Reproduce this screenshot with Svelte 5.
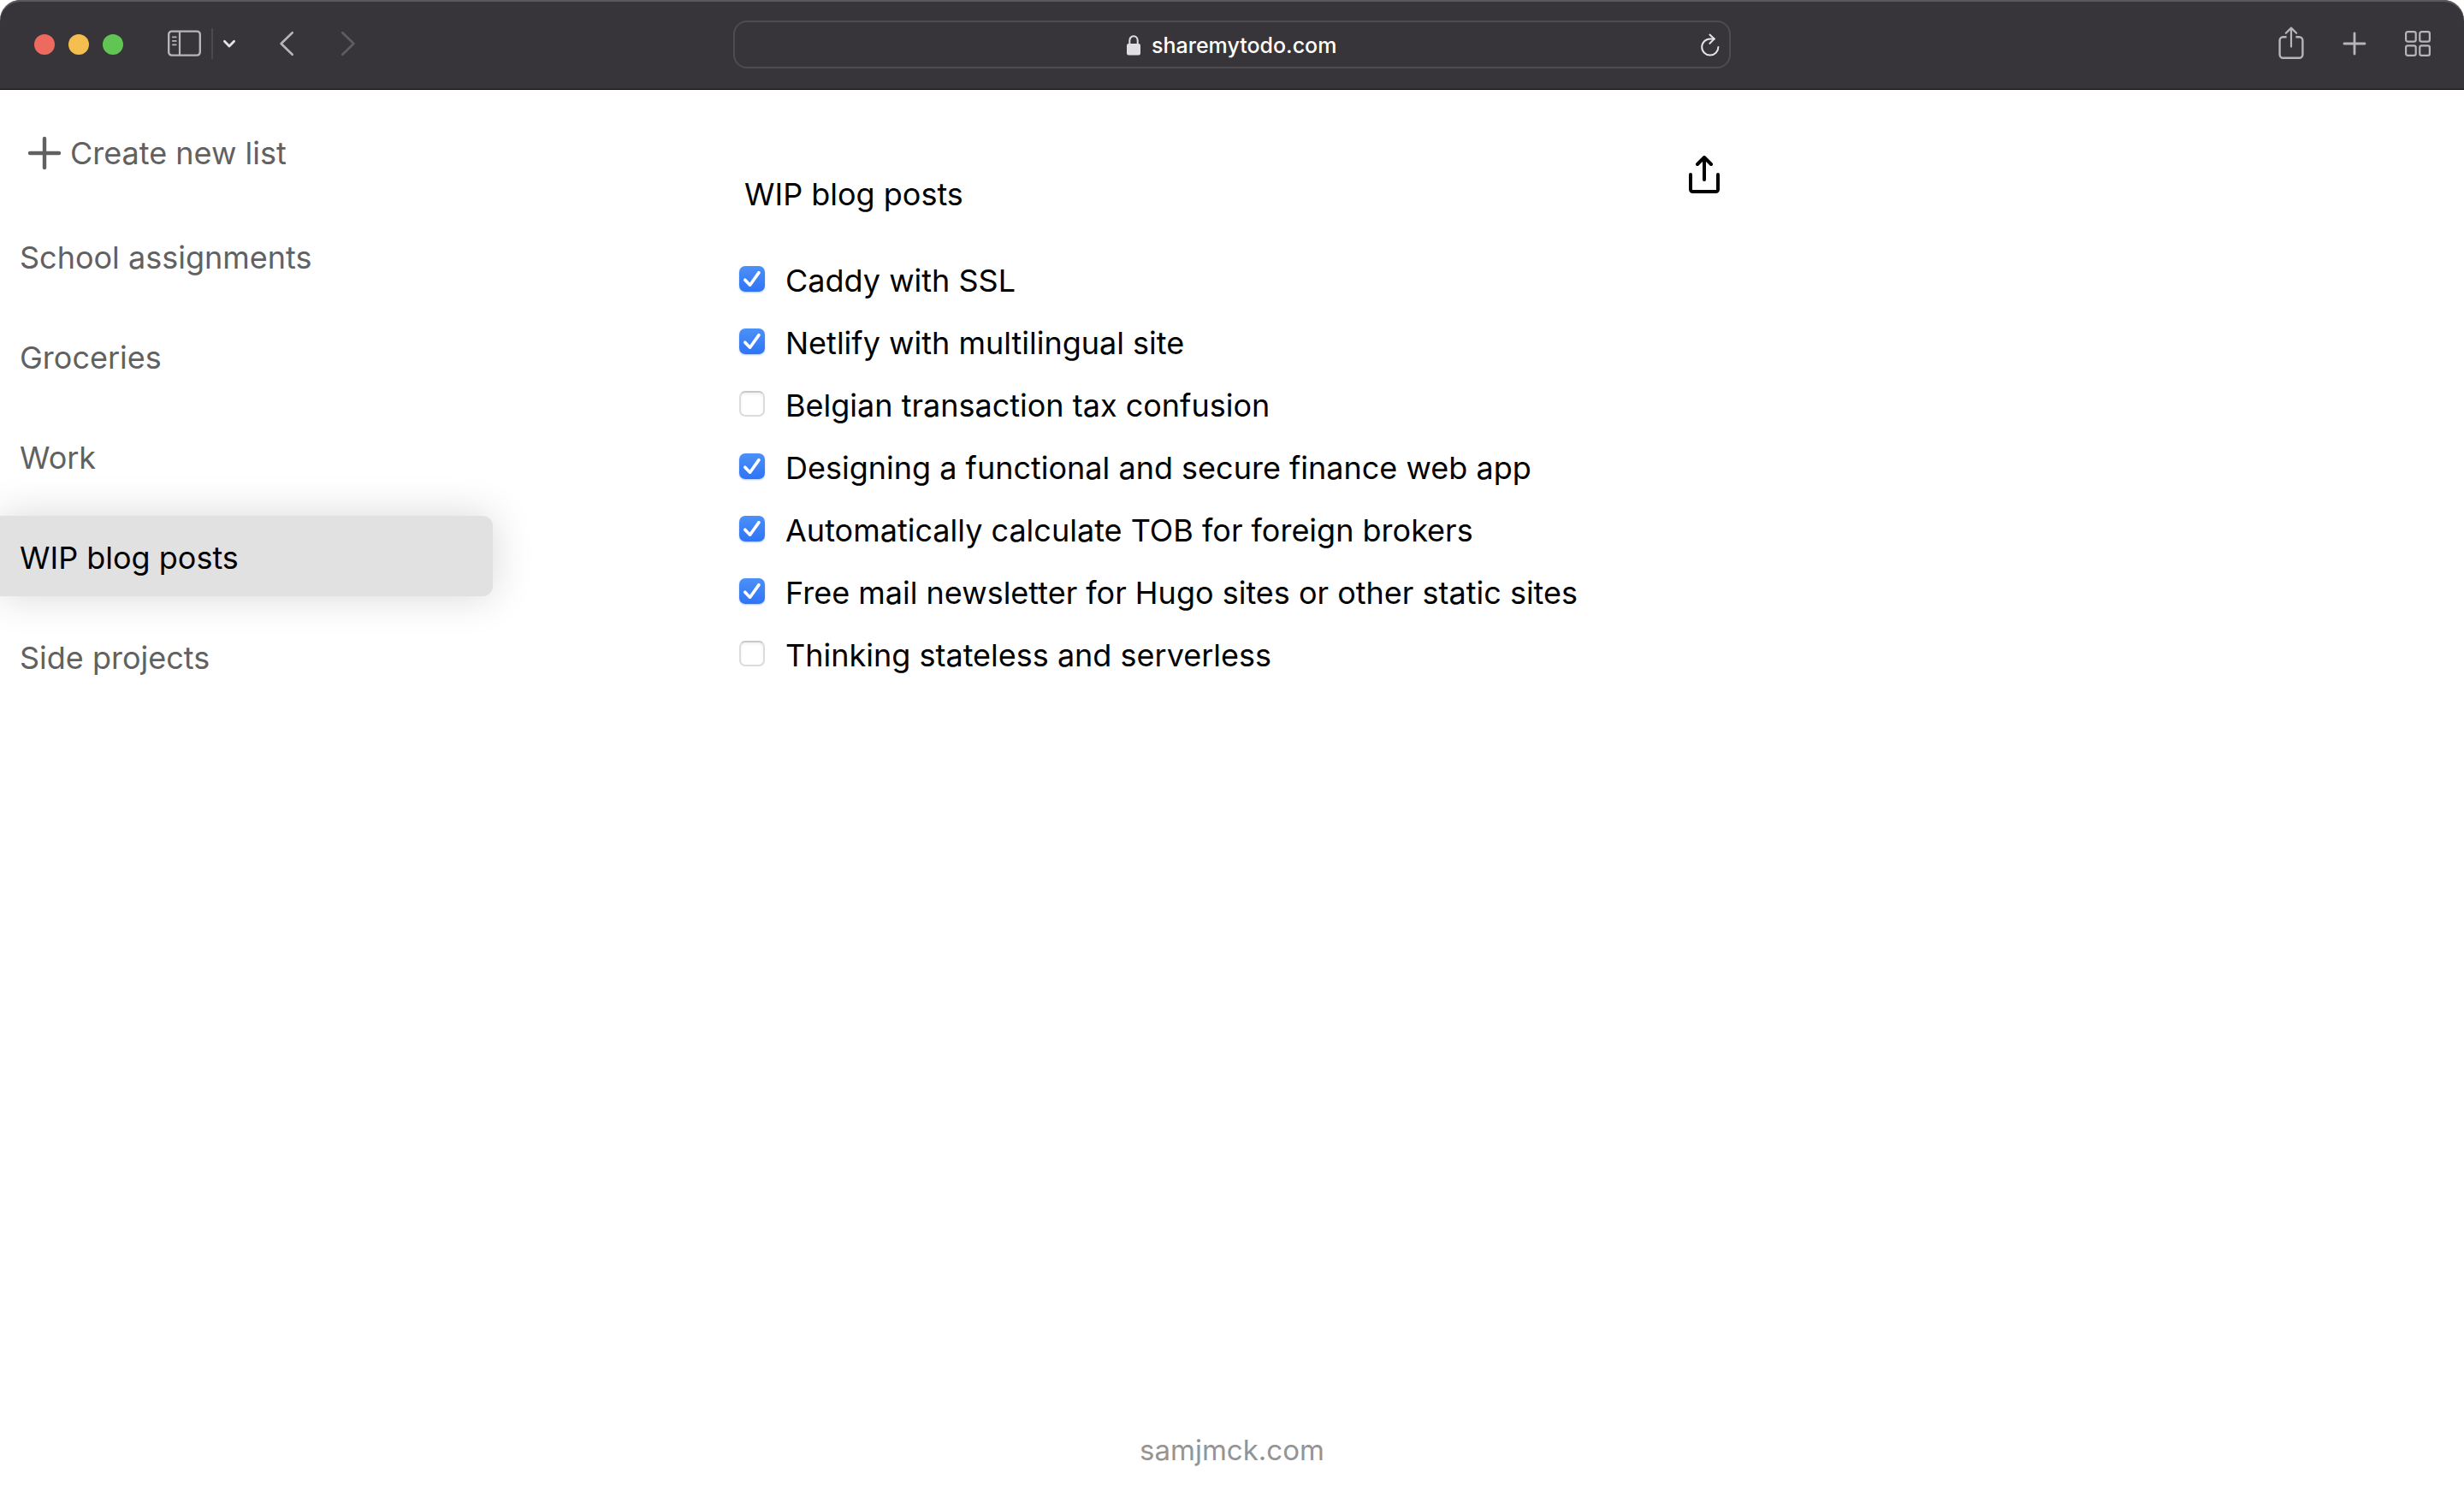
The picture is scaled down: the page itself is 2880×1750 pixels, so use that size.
<script lang="ts">
  type Todo = { text: string; done: boolean };

  const lists = ['School assignments', 'Groceries', 'Work', 'WIP blog posts', 'Side projects'];
  let active = $state('WIP blog posts');
  let address = $state('sharemytodo.com');

  let todos = $state<Todo[]>([
    { text: 'Caddy with SSL', done: true },
    { text: 'Netlify with multilingual site', done: true },
    { text: 'Belgian transaction tax confusion', done: false },
    { text: 'Designing a functional and secure finance web app', done: true },
    { text: 'Automatically calculate TOB for foreign brokers', done: true },
    { text: 'Free mail newsletter for Hugo sites or other static sites', done: true },
    { text: 'Thinking stateless and serverless', done: false }
  ]);
</script>

<div class="window">
  <header class="toolbar">
    <div class="tools left">
      <div class="lights">
        <button class="light close" aria-label="Close window"></button>
        <button class="light minimize" aria-label="Minimize window"></button>
        <button class="light zoom" aria-label="Zoom window"></button>
      </div>
      <div class="panel-tools">
        <button class="tool" aria-label="Show sidebar">
          <svg width="40" height="32" viewBox="0 0 40 32" fill="none" stroke="currentColor" stroke-width="2.4" stroke-linecap="round">
            <rect x="1.2" y="1.6" width="36.6" height="28" rx="3.6" />
            <path d="M14 2v27" stroke-width="2.2" />
            <path d="M5.8 8.4h4M5.8 12.9h4M5.8 17.3h4" stroke-width="1.7" />
          </svg>
        </button>
        <span class="divider"></span>
        <button class="tool bright" aria-label="Tab groups">
          <svg width="16" height="12" viewBox="0 0 16 12" fill="none" stroke="currentColor" stroke-width="2.8" stroke-linecap="round" stroke-linejoin="round">
            <path d="M2.4 3.2 8 9l5.6-5.8" />
          </svg>
        </button>
      </div>
      <div class="history">
        <button class="tool" aria-label="Back">
          <svg width="18" height="30" viewBox="0 0 18 30" fill="none" stroke="currentColor" stroke-width="2.6" stroke-linecap="round" stroke-linejoin="round">
            <path d="M15.7 2.2 2.6 15l13.1 12.8" />
          </svg>
        </button>
        <button class="tool dim" aria-label="Forward" disabled>
          <svg width="18" height="30" viewBox="0 0 18 30" fill="none" stroke="currentColor" stroke-width="2.6" stroke-linecap="round" stroke-linejoin="round">
            <path d="M2.3 2.2 15.4 15 2.3 27.8" />
          </svg>
        </button>
      </div>
    </div>

    <div class="address">
      <span></span>
      <div class="site">
        <svg width="18" height="24" viewBox="0 0 18 24" aria-hidden="true">
          <path d="M4.3 11V6.6C4.3 3.5 6.3 1.3 9 1.3s4.7 2.2 4.7 5.3V11" fill="none" stroke="#dfdfe1" stroke-width="2" />
          <rect x="1" y="10" width="16" height="13.4" rx="2.2" fill="#dfdfe1" />
        </svg>
        <input type="text" aria-label="Address" bind:value={address} />
      </div>
      <button class="tool reload" aria-label="Reload page">
        <svg width="24" height="28" viewBox="0 0 24 28" fill="none" stroke="currentColor" stroke-width="2" stroke-linecap="round" stroke-linejoin="round">
          <path d="M16.8 6.4h-5a9.600 9.600 0 1 0 9.600 9.600" />
          <path d="m11.400 1.600 5.400 4.800-5.400 5.400" />
        </svg>
      </button>
    </div>

    <div class="tools right">
      <button class="tool" aria-label="Share page">
        <svg width="30" height="40" viewBox="0 1 30 40" fill="none" stroke="currentColor" stroke-width="2.4" stroke-linecap="round" stroke-linejoin="round">
          <path d="M9.6 13.2h-4a4 4 0 0 0-4 4v16.6a4 4 0 0 0 4 4h18.8a4 4 0 0 0 4-4V17.2a4 4 0 0 0-4-4h-4" stroke-linecap="butt" />
          <path d="M15 24.6V3M8.8 8.8 15 2.6l6.2 6.2" stroke-width="2.2" />
        </svg>
      </button>
      <button class="tool" aria-label="New tab">
        <svg width="28" height="28" viewBox="0 0 28 28" fill="none" stroke="currentColor" stroke-width="2.8" stroke-linecap="round">
          <path d="M14 2v24M2 14h24" />
        </svg>
      </button>
      <button class="tool" aria-label="Tab overview">
        <svg width="30" height="30" viewBox="0 0 30 30" fill="none" stroke="currentColor" stroke-width="2.2">
          <rect x="1.1" y="1.1" width="11.6" height="11.6" rx="2.2" />
          <rect x="17.3" y="1.1" width="11.6" height="11.6" rx="2.2" />
          <rect x="1.1" y="17.3" width="11.6" height="11.6" rx="2.2" />
          <rect x="17.3" y="17.3" width="11.6" height="11.6" rx="2.2" />
        </svg>
      </button>
    </div>
  </header>

  <div class="page">
    <aside>
      <button class="create">
        <svg width="40" height="40" viewBox="0 0 40 40" fill="none" stroke="currentColor" stroke-width="4.4" stroke-linecap="round" aria-hidden="true">
          <path d="M20 3v34M3 20h34" />
        </svg>
        Create new list
      </button>
      <nav aria-label="Lists">
        {#each lists as name}
          <button class="list" class:active={active === name} onclick={() => (active = name)}>{name}</button>
        {/each}
      </nav>
    </aside>

    <main>
      <div class="heading">
        <h1>{active}</h1>
        <button class="share" aria-label="Share list">
          <svg width="36" height="44" viewBox="0 0 36 44" fill="none" stroke="currentColor" stroke-width="4" stroke-linecap="round" stroke-linejoin="round">
            <path d="M2 22v17.500a2.500 2.500 0 0 0 2.500 2.500h27a2.500 2.500 0 0 0 2.500-2.500V22" />
            <path d="M18 28V2M10 10l8-8 8 8" />
          </svg>
        </button>
      </div>
      <ul>
        {#each todos as todo}
          <li>
            <label>
              <span class="check">
                <input type="checkbox" bind:checked={todo.done} />
                {#if todo.done}
                  <svg width="30" height="30" viewBox="0 0 30 30" fill="none" stroke="#fff" stroke-width="3.6" stroke-linecap="round" stroke-linejoin="round" aria-hidden="true">
                    <path d="m6.800 16.200 5.800 6L23 7.600" />
                  </svg>
                {/if}
              </span>
              {todo.text}
            </label>
          </li>
        {/each}
      </ul>
    </main>
  </div>

  <footer><a href="https://samjmck.com">samjmck.com</a></footer>
</div>

<style>
  :global(body) {
    margin: 0;
    background: #fff;
  }

  .window {
    display: flex;
    flex-direction: column;
    box-sizing: border-box;
    min-height: 100vh;
    font-family: Inter, 'Liberation Sans', sans-serif;
    font-size: 36px;
    line-height: 48px;
    color: #000;
  }

  button,
  input {
    margin: 0;
    padding: 0;
    border: 0;
    background: none;
    font: inherit;
    color: inherit;
  }

  svg {
    display: block;
    flex: none;
  }

  .toolbar {
    display: grid;
    grid-template-columns: 1fr 40.5% 1fr;
    align-items: center;
    height: 104px;
    border-bottom: 1px solid #000;
    border-radius: 24px 24px 0 0;
    background: #373539;
    box-shadow: inset 0 2px #5b595e;
  }

  .tools,
  .lights,
  .panel-tools,
  .history {
    display: flex;
    align-items: center;
  }

  .panel-tools,
  .history,
  .right {
    padding-bottom: 2px;
  }

  .tool {
    color: #b7b5ba;
  }

  .tool.bright {
    color: #e4e3e6;
  }

  .tool.dim {
    color: #5f5d62;
  }

  .left {
    padding-left: 40px;
  }

  .lights {
    gap: 16px;
  }

  .light {
    width: 24px;
    height: 24px;
    border-radius: 50%;
  }

  .close {
    background: #ed6a5e;
  }

  .minimize {
    background: #f5bf4f;
  }

  .zoom {
    background: #61c554;
  }

  .panel-tools {
    gap: 11px;
    margin-left: 52px;
  }

  .divider {
    width: 2px;
    height: 36px;
    background: #4b494e;
  }

  .history {
    gap: 54px;
    margin-left: 50px;
  }

  .right {
    justify-content: flex-end;
    gap: 45px;
    padding-right: 39px;
  }

  .address {
    display: grid;
    grid-template-columns: 1fr auto 1fr;
    align-items: center;
    box-sizing: border-box;
    height: 56px;
    padding: 2px 10px 0;
    border: 2px solid #4e4c51;
    border-radius: 16px;
  }

  .site {
    display: flex;
    align-items: center;
    gap: 12px;
    font-size: 25px;
    font-weight: 500;
    line-height: 32px;
    color: #fff;
  }

  .site input {
    width: 218px;
    height: 32px;
  }

  .reload {
    justify-self: end;
    color: #e4e3e6;
  }

  .page {
    display: grid;
    grid-template-columns: 20% 40%;
    column-gap: 10%;
    flex: 1;
  }

  aside {
    padding-top: 50px;
    color: #616161;
  }

  .create {
    display: flex;
    align-items: center;
    gap: 10px;
    padding-left: 32px;
  }

  nav {
    display: flex;
    flex-direction: column;
    gap: 23px;
    margin-top: 49px;
  }

  .list {
    box-sizing: border-box;
    height: 94px;
    padding: 4px 24px 0 23px;
    border-radius: 0 12px 12px 0;
    text-align: left;
  }

  .list.active {
    background: #e1e1e1;
    box-shadow: 0 0 48px rgba(0, 0, 0, 0.16);
    color: #000;
  }

  main {
    padding-top: 77px;
  }

  .heading {
    display: flex;
    justify-content: space-between;
    align-items: flex-start;
    padding: 0 6px;
  }

  h1 {
    margin: 21px 0 0;
    font-size: inherit;
    font-weight: 400;
  }

  ul {
    display: flex;
    flex-direction: column;
    gap: 25px;
    margin: 53px 0 0;
    padding: 0;
    list-style: none;
  }

  label {
    display: flex;
    align-items: center;
    gap: 24px;
  }

  .check {
    display: grid;
    padding-bottom: 4px;
  }

  .check > * {
    grid-area: 1 / 1;
  }

  .check svg {
    pointer-events: none;
  }

  .check input {
    appearance: none;
    box-sizing: border-box;
    width: 30px;
    height: 30px;
    border: 2px solid #dcdcdc;
    border-top-color: #c8c8c8;
    border-radius: 7px;
    background: #fff;
    box-shadow: inset 0 2px 3px #f0f0f0;
  }

  .check input:checked {
    border: 0;
    background: linear-gradient(#4c90f8, #2f74f5);
    box-shadow: 0 1px 2px rgba(47, 116, 245, 0.4);
  }

  footer {
    padding-bottom: 31px;
    font-size: 33px;
    text-align: center;
    color: #949494;
  }

  footer a {
    color: inherit;
    text-decoration: none;
  }
</style>
